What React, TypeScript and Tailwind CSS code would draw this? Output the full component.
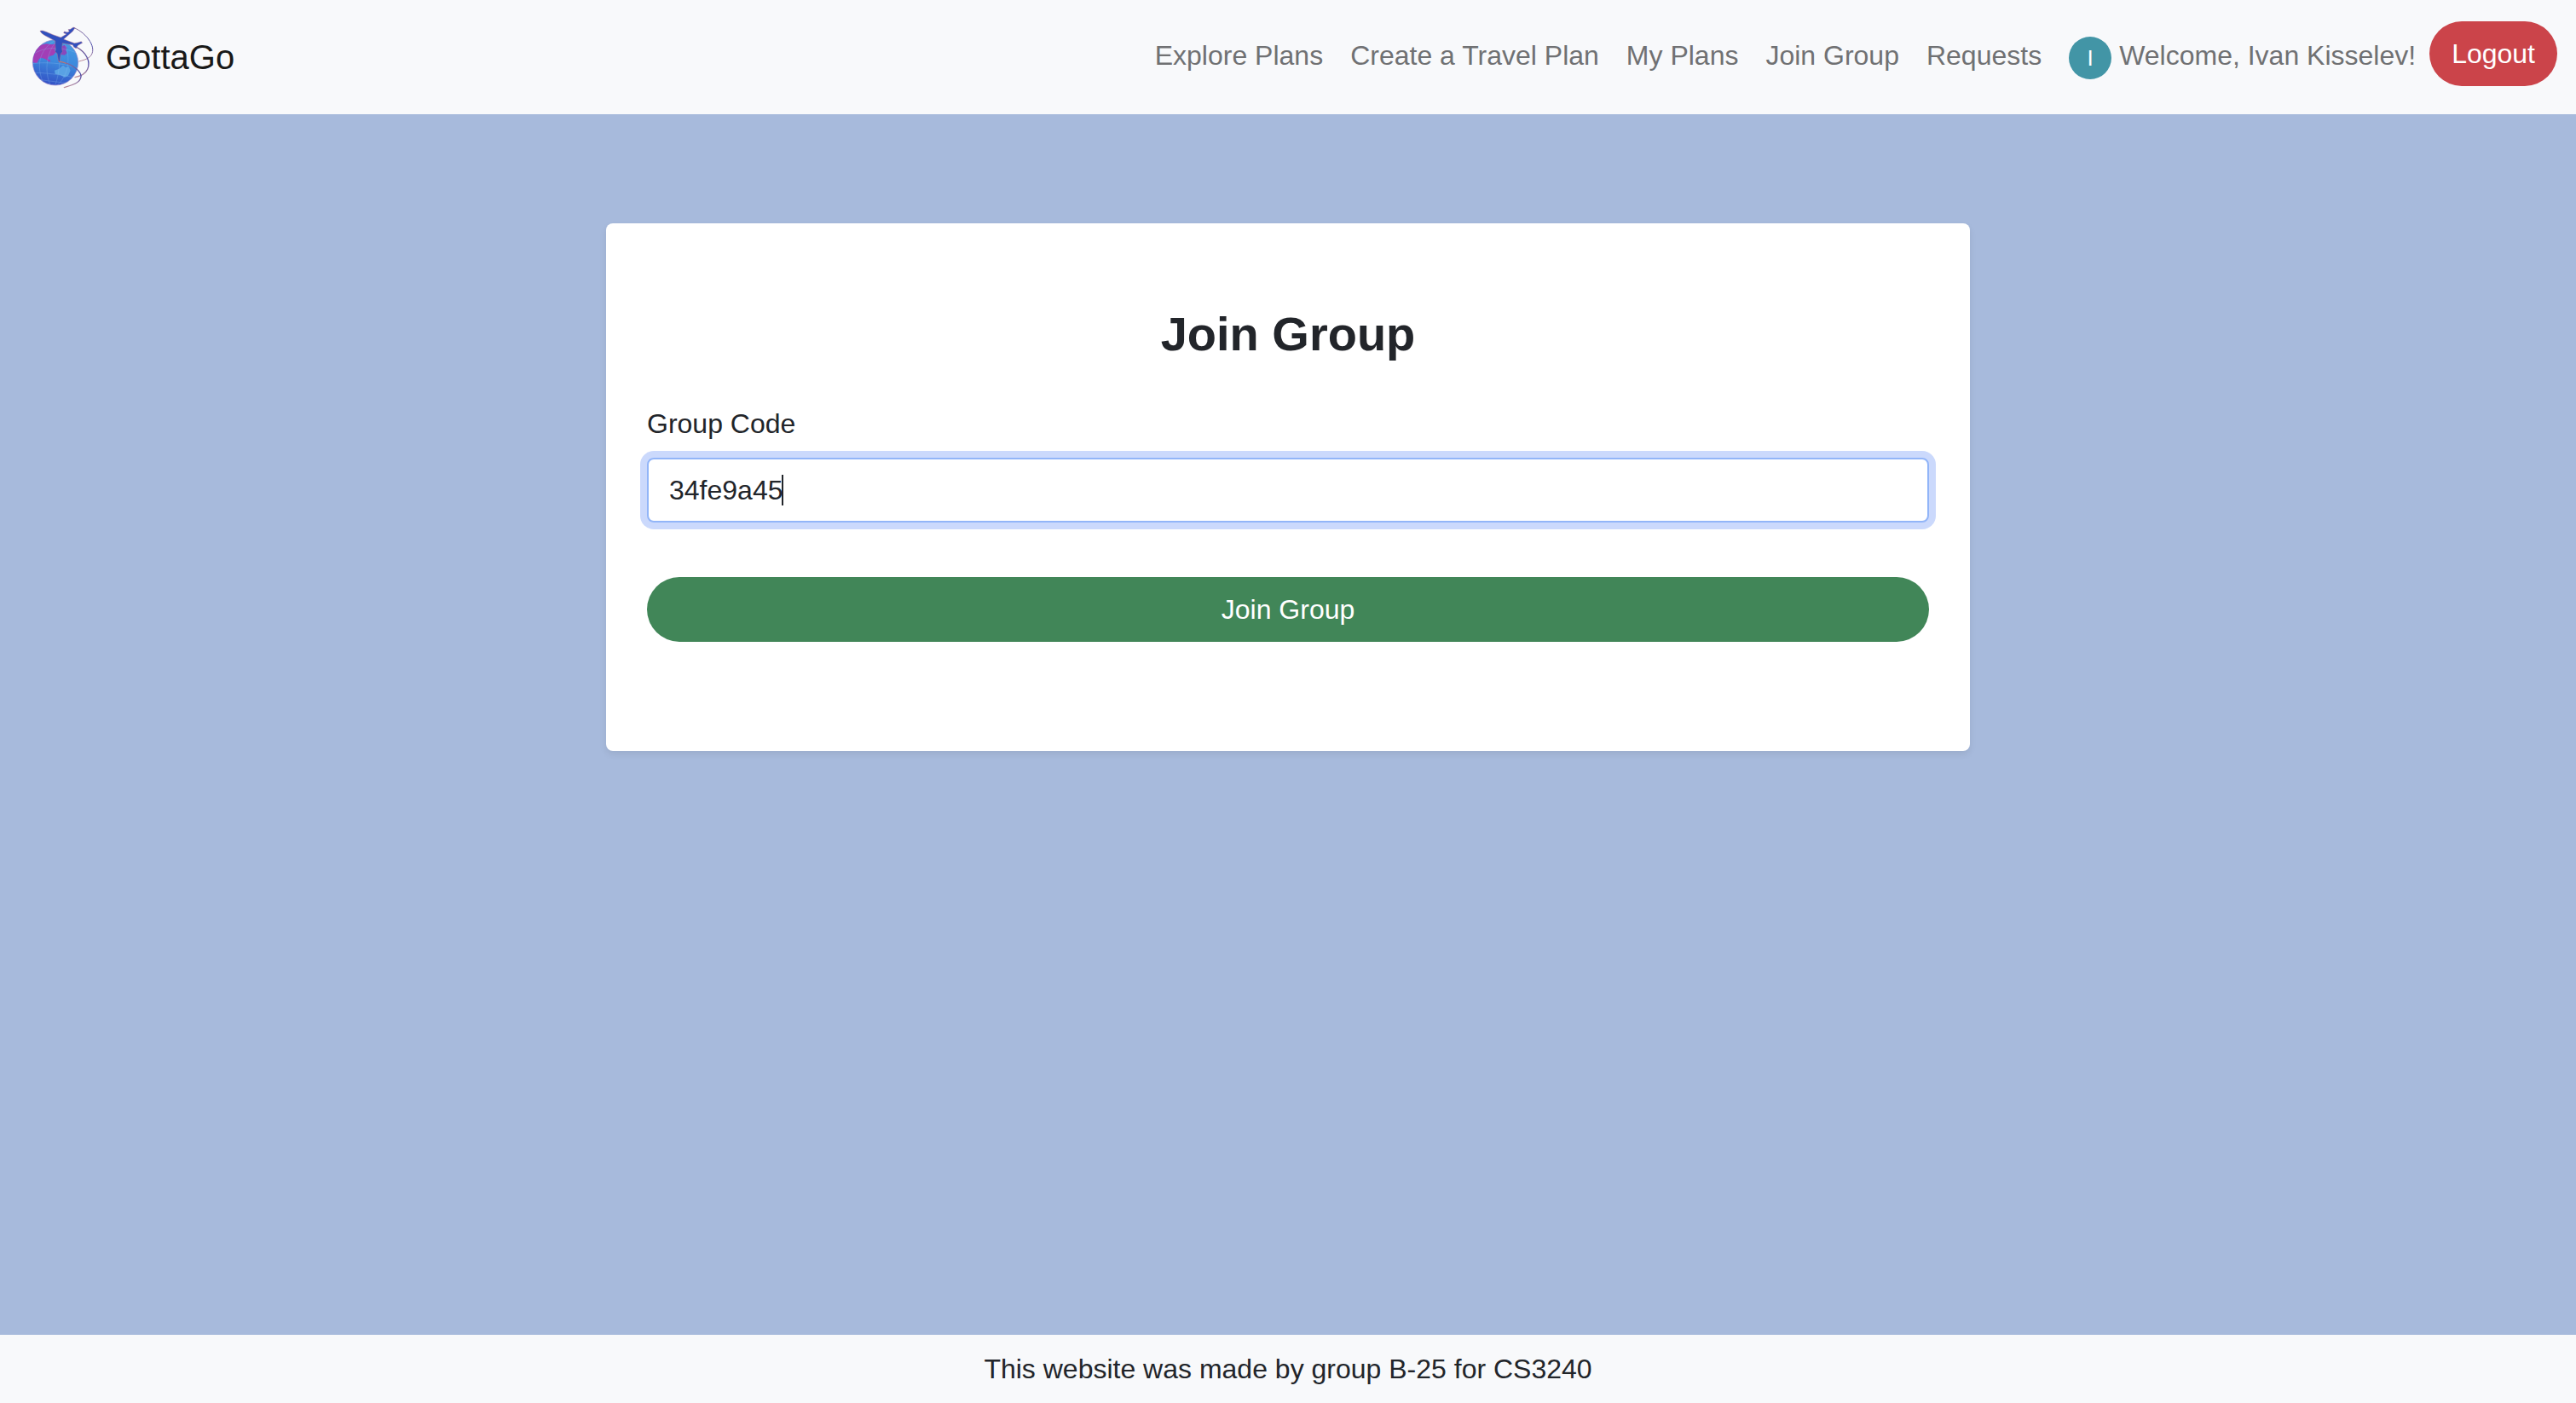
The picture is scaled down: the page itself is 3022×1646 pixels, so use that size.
import { useState } from "react";

const links = ["Explore Plans", "Create a Travel Plan", "My Plans", "Join Group", "Requests"];

function Logo() {
  return (
    <svg viewBox="0 0 252 282" className="h-[94px] w-[84px] shrink-0" fill="none" aria-hidden="true">
      <defs>
        <linearGradient id="sea" x1="0.65" y1="0" x2="0.4" y2="1">
          <stop offset="0" stopColor="#479ce2" />
          <stop offset="0.5" stopColor="#3d88dc" />
          <stop offset="1" stopColor="#3452c6" />
        </linearGradient>
        <linearGradient id="trail" x1="0" y1="0" x2="0" y2="1">
          <stop offset="0" stopColor="#8a6f9c" />
          <stop offset="0.5" stopColor="#4848a8" />
          <stop offset="1" stopColor="#c08f9c" />
        </linearGradient>
        <clipPath id="globe">
          <circle cx="105" cy="160" r="80" />
        </clipPath>
      </defs>
      <circle cx="105" cy="160" r="80" fill="url(#sea)" stroke="#9a86cc" strokeWidth="2" />
      <g clipPath="url(#globe)">
        <path d="M26 140 L38 114 L54 98 L74 94 L92 97 L104 94 L108 106 L102 114 L106 124 L98 134 L84 138 L78 146 L88 154 L84 158 L70 148 L58 144 L48 146 L40 162 L26 160Z" fill="#a23eb6" />
        <path d="M122 106 L138 98 L146 108 L142 118 L146 126 L138 134 L124 132 L116 122Z" fill="#8a48bc" />
        <path d="M102 188 L118 182 L132 170 L142 178 L152 174 L158 188 L150 206 L138 212 L122 204 L104 200Z" fill="#5aa2e4" />
        <g stroke="#8fc0ee" strokeWidth="1.5" opacity="0.55">
          <path d="M26 132 C60 106 120 100 184 128" />
          <path d="M24 164 C60 158 130 160 184 180" />
          <path d="M32 196 C64 196 120 202 168 212" />
          <path d="M48 220 C72 224 110 228 142 232" />
          <path d="M104 82 C56 110 34 160 60 226" />
          <path d="M112 82 C74 120 64 190 88 240" />
          <path d="M120 82 C124 130 120 200 104 240" />
          <path d="M132 84 C160 130 156 200 112 240" />
        </g>
      </g>
      <g stroke="url(#trail)" strokeWidth="4" strokeLinecap="round">
        <path d="M171 38 C216 56 256 112 226 140 C214 150 202 152 188 156" strokeWidth="3" />
        <path d="M176 104 C214 124 230 156 218 184 C210 202 196 208 174 212" />
        <path d="M120 158 C158 160 202 192 194 214 C188 234 162 240 136 248" />
      </g>
      <path d="M51 49 C57 46 66 49 72 52 L96 62 L124 72 L144 60 L134 56 L136 51 L147 54 L154 50 L150 44 L158 43 L168 36 L174 38 L166 50 L134 78 L142 81 L172 92 L184 90 L196 86 L200 91 L184 100 L178 110 L170 106 L166 98 L130 92 L128 110 L130 122 L124 130 L120 158 L116 156 L111 128 L104 122 L106 114 L104 98 L104 84 L70 66 C62 62 54 56 51 49Z" fill="#3050be" stroke="#b27492" strokeWidth="1.5" />
      <path d="M118 157 C126 156 134 160 142 163" stroke="#c47c6c" strokeWidth="3" />
    </svg>
  );
}

export default function App() {
  const [code, setCode] = useState("34fe9a45");

  return (
    <div className="flex min-h-screen flex-col bg-[#a7badc] font-['Liberation_Sans',Arial,sans-serif] text-[32px] leading-[48px] text-[#22252a]">
      <header className="flex min-h-[134px] items-center justify-between bg-[#f8f9fb] pr-[22px] pl-[30px]">
        <a href="#" className="flex items-center gap-[10px] text-[40px] leading-[60px] text-[#191919]">
          <Logo />
          GottaGo
        </a>
        <nav className="flex items-start text-[#707173]">
          {links.map((label) => (
            <a key={label} href="#" className="p-4 whitespace-nowrap">
              {label}
            </a>
          ))}
          <div className="flex gap-[9px] p-4 whitespace-nowrap">
            <span className="mt-[2px] flex size-[50px] items-center justify-center rounded-full bg-[#4295a6] text-[26px] text-white">
              I
            </span>
            <span>Welcome, Ivan Kisselev!</span>
          </div>
          <button type="button" className="rounded-full bg-[#cb444a] px-[26px] py-[14px] text-white">
            Logout
          </button>
        </nav>
      </header>

      <main className="flex-1 px-6 pt-32">
        <form
          className="mx-auto max-w-[1600px] rounded-lg bg-white px-12 pt-24 pb-32 shadow-[0_4px_8px_rgba(0,0,0,0.075)]"
          onSubmit={(e) => e.preventDefault()}
        >
          <h1 className="mb-12 text-center text-[56px] leading-[67px] font-bold">Join Group</h1>
          <label htmlFor="code" className="mb-4 block">
            Group Code
          </label>
          <div className="relative mb-16">
            <input
              id="code"
              type="text"
              value={code}
              onChange={(e) => setCode(e.target.value)}
              className="block w-full rounded-lg border-2 border-[#92b5f8] bg-white px-6 py-3 caret-transparent shadow-[0_0_0_8px_#cbd9fc] outline-none"
            />
            <span className="pointer-events-none absolute top-5 left-[158px] h-9 w-[2px] bg-[#22252a]" />
          </div>
          <button type="submit" className="block w-full rounded-full bg-[#418658] py-[14px] text-white">
            Join Group
          </button>
        </form>
      </main>

      <footer className="bg-[#f8f9fb] py-4 text-center">This website was made by group B-25 for CS3240</footer>
    </div>
  );
}
